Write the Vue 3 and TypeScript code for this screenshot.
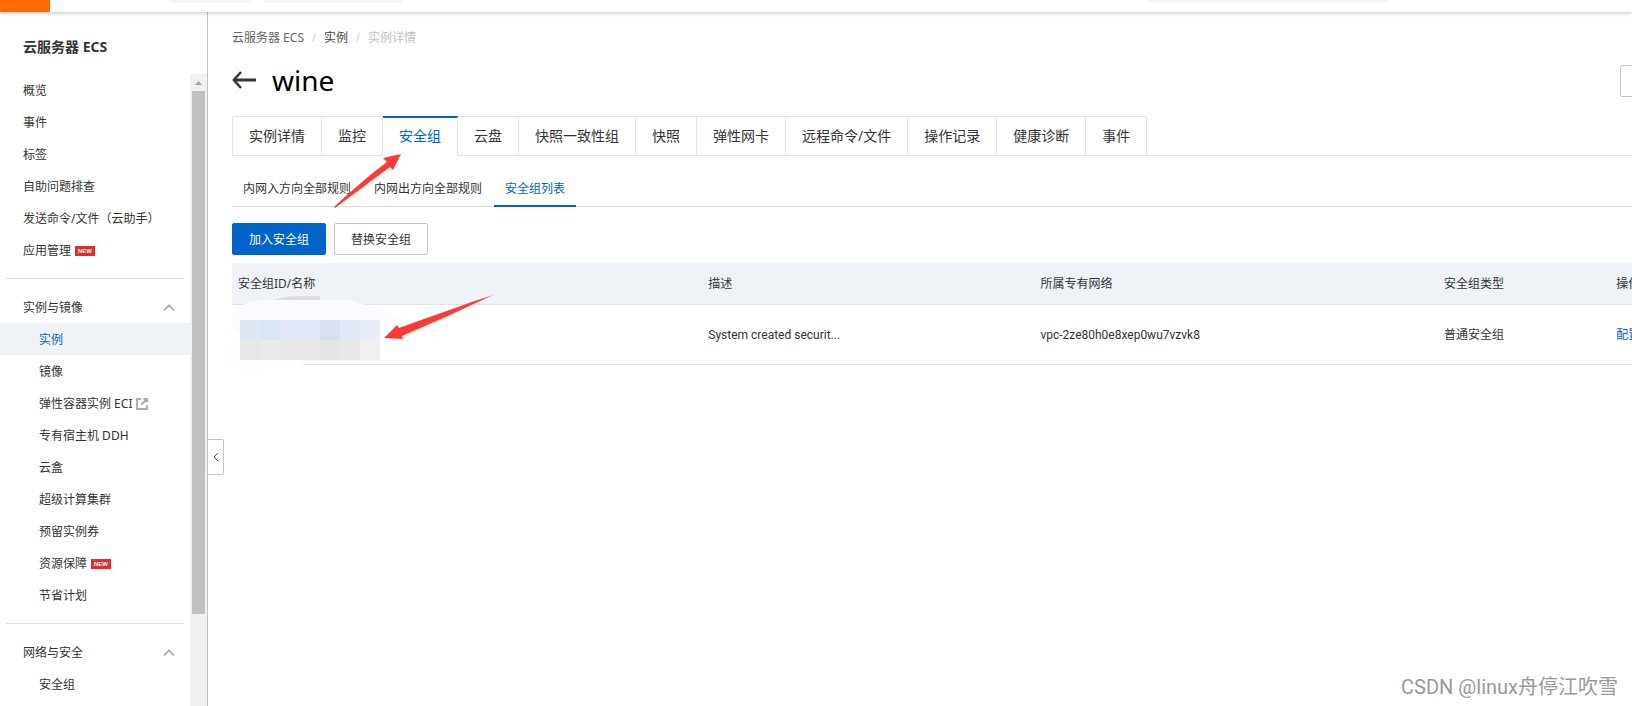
<script setup lang="ts">
import { ref } from 'vue'

interface NavItem {
  label: string
  badge?: boolean
  external?: boolean
}
interface NavGroup {
  title: string
  items: NavItem[]
}
interface SecurityGroup {
  description: string
  vpc: string
  type: string
}

const topItems: NavItem[] = [
  { label: '概览' },
  { label: '事件' },
  { label: '标签' },
  { label: '自助问题排查' },
  { label: '发送命令/文件（云助手）' },
  { label: '应用管理', badge: true },
]

const groups: NavGroup[] = [
  {
    title: '实例与镜像',
    items: [
      { label: '实例' },
      { label: '镜像' },
      { label: '弹性容器实例 ECI', external: true },
      { label: '专有宿主机 DDH' },
      { label: '云盒' },
      { label: '超级计算集群' },
      { label: '预留实例券' },
      { label: '资源保障', badge: true },
      { label: '节省计划' },
    ],
  },
  { title: '网络与安全', items: [{ label: '安全组' }] },
]
const currentNav = ref('实例')

const tabs = ['实例详情', '监控', '安全组', '云盘', '快照一致性组', '快照', '弹性网卡', '远程命令/文件', '操作记录', '健康诊断', '事件']
const currentTab = ref('安全组')

const subTabs = ['内网入方向全部规则', '内网出方向全部规则', '安全组列表']
const currentSubTab = ref('安全组列表')

const rows: SecurityGroup[] = [
  { description: 'System created securit...', vpc: 'vpc-2ze80h0e8xep0wu7vzvk8', type: '普通安全组' },
]

const mosaic: string[][] = [
  ['#e0e7f4', '#dae6f3', '#e2e8f4', '#e2e8f5', '#d9e0ee', '#e2e9f4', '#e9edf8'],
  ['#e8e8e8', '#eaeaea', '#e9e9e9', '#eae8e9', '#e6e6e6', '#e9e9e9', '#f0f0f0'],
]
</script>

<template>
  <div class="page">
    <header class="topbar">
      <span class="menu-block"></span>
      <span class="top-chip chip-a"></span>
      <span class="top-chip chip-b"></span>
      <span class="top-search"></span>
    </header>

    <div class="body">
      <aside class="sidebar">
        <h2 class="side-title">云服务器 ECS</h2>
        <div class="side-scroll">
          <nav class="side-nav">
            <a v-for="item in topItems" :key="item.label" href="#" class="nav-item">
              {{ item.label }}<span v-if="item.badge" class="badge">NEW</span>
            </a>
            <section v-for="group in groups" :key="group.title" class="nav-group">
              <button type="button" class="group-title">
                <span>{{ group.title }}</span>
                <svg width="12" height="8" viewBox="0 0 12 8"><path d="M1 6.500 6 1.300 11 6.500" fill="none" stroke="#aaa" stroke-width="1.800" /></svg>
              </button>
              <a
                v-for="item in group.items"
                :key="item.label"
                href="#"
                class="nav-item child"
                :class="{ current: item.label === currentNav }"
                @click.prevent="currentNav = item.label"
              >
                {{ item.label }}<span v-if="item.badge" class="badge">NEW</span>
                <svg v-if="item.external" class="external" width="12" height="12" viewBox="0 0 12 12">
                  <path d="M5 1H1v10h10V7M7.5 1H11v3.500M11 1 5.500 6.500" fill="none" stroke="#aaa" stroke-width="1.800" />
                </svg>
              </a>
            </section>
          </nav>
          <div class="scrollbar">
            <svg class="scroll-up" width="17" height="17" viewBox="0 0 17 17"><path d="M5 11 8.500 7 12 11Z" fill="#a3a3a3" /></svg>
            <div class="scroll-track"><div class="scroll-thumb"></div></div>
          </div>
        </div>
        <button type="button" class="collapse" aria-label="收起">
          <svg width="6" height="10" viewBox="0 0 6 10"><path d="M5 1 1 5 5 9" fill="none" stroke="#555" /></svg>
        </button>
      </aside>

      <main class="main">
        <div class="content">
          <nav class="crumbs">
            <a href="#" class="crumb">云服务器 ECS</a><span class="sep">/</span>
            <a href="#" class="crumb dark">实例</a><span class="sep">/</span>
            <span class="crumb last">实例详情</span>
          </nav>

          <div class="heading">
            <button type="button" class="back" aria-label="返回">
              <svg width="24" height="18" viewBox="0 0 24 18">
                <path d="M24 9H2" fill="none" stroke="#333" stroke-width="3" />
                <path d="M9 1 1.800 9 9 17" fill="none" stroke="#333" stroke-width="2.400" />
              </svg>
            </button>
            <h1>wine</h1>
            <button type="button" class="heading-action" aria-label="更多操作"></button>
          </div>

          <div class="tabs" role="tablist">
            <button
              v-for="tab in tabs"
              :key="tab"
              type="button"
              role="tab"
              class="tab"
              :class="{ active: tab === currentTab }"
              :aria-selected="tab === currentTab"
              @click="currentTab = tab"
            >{{ tab }}</button>
          </div>

          <div class="subtabs" role="tablist">
            <button
              v-for="tab in subTabs"
              :key="tab"
              type="button"
              role="tab"
              class="subtab"
              :class="{ active: tab === currentSubTab }"
              :aria-selected="tab === currentSubTab"
              @click="currentSubTab = tab"
            >{{ tab }}</button>
          </div>

          <div class="actions">
            <button type="button" class="btn primary">加入安全组</button>
            <button type="button" class="btn">替换安全组</button>
          </div>

          <table class="table">
            <colgroup>
              <col class="c-id" />
              <col class="c-desc" />
              <col class="c-vpc" />
              <col class="c-type" />
              <col />
            </colgroup>
            <thead>
              <tr>
                <th>安全组ID/名称</th>
                <th>描述</th>
                <th>所属专有网络</th>
                <th>安全组类型</th>
                <th>操作</th>
              </tr>
            </thead>
            <tbody>
              <tr v-for="row in rows" :key="row.vpc">
                <td class="id-cell">
                  <svg class="masked" width="184" height="80" viewBox="0 0 184 80">
                    <path d="M53 6 66 3 79 2H100V8H53Z" fill="#dcdde0" />
                    <path d="M20 80V77C8 74 0 66 1 59 2 50 9 44 18 41L10 32C9 22 16 16 25 10L53 6H128L140 10 160 15 182 26 160 28V66H83V75L56 76 20 80Z" fill="#fefefd" />
                    <path d="M12 24C13 16 20 12 25 10 38 5 48 6 53 6H128L140 10C156 11 170 19 182 26H20V40C12 36 10 30 12 24Z" fill="#fafbfe" />
                    <template v-for="(line, y) in mosaic" :key="y">
                      <rect v-for="(color, x) in line" :key="x" :x="20 + x * 20" :y="26 + y * 20" width="20" height="20" :fill="color" />
                    </template>
                  </svg>
                </td>
                <td>{{ row.description }}</td>
                <td>{{ row.vpc }}</td>
                <td>{{ row.type }}</td>
                <td><a href="#" class="link">配置规则</a></td>
              </tr>
            </tbody>
          </table>
        </div>
      </main>
    </div>

    <svg class="arrow arrow-tab" width="68" height="54" viewBox="0 0 68 54">
      <path d="M67 0 49 4 53 8C34 22 16 38 0 53L1 54C20 40 38 26 56 13L59 16Z" fill="#fd3a38" />
    </svg>
    <svg class="arrow arrow-row" width="110" height="45" viewBox="0 0 110 45">
      <path d="M0 43 13 30 15 33C46 22 78 10 109 0 79 14 49 28 18 41L19 44Z" fill="#fd3a38" />
    </svg>
    <div class="watermark">CSDN @linux舟停江吹雪</div>
  </div>
</template>

<style>
body {
  margin: 0;
  overflow: hidden;
}
</style>

<style scoped>
.page {
  position: relative;
  display: flex;
  flex-direction: column;
  height: 100vh;
  overflow: hidden;
  background: #fff;
  color: #333;
  font: 12px/20px "Noto Sans", "Noto Sans CJK SC", sans-serif;
}
button {
  padding: 0;
  border: 0;
  background: none;
  color: inherit;
  font: inherit;
  cursor: pointer;
}
a {
  color: inherit;
  text-decoration: none;
}
svg {
  display: block;
  flex: none;
}
.topbar {
  position: relative;
  z-index: 2;
  display: flex;
  align-items: flex-start;
  flex: none;
  height: 12px;
  background: #fff;
  box-shadow: 0 1px 4px rgba(0, 0, 0, 0.25);
}
.menu-block {
  width: 50px;
  height: 12px;
  margin-right: 120px;
  background: #ff6a00;
}
.top-chip {
  height: 3px;
  margin-right: 12px;
  background: #f4f5f7;
}
.chip-a {
  width: 82px;
}
.chip-b {
  width: 138px;
}
.top-search {
  width: 240px;
  height: 2px;
  margin: 0 244px 0 auto;
  background: #f5f5f5;
}
.body {
  display: flex;
  flex: 1;
  min-height: 0;
}
.sidebar {
  position: relative;
  display: flex;
  flex-direction: column;
  flex: none;
  width: 207px;
  border-right: 1px solid #c0c1c8;
}
.side-title {
  margin: 0;
  padding: 25px 23px 17px;
  font-size: 14px;
  line-height: 20px;
}
.side-scroll {
  display: flex;
  flex: 1;
  min-height: 0;
}
.side-nav {
  flex: 1;
  overflow: hidden;
}
.nav-item {
  display: flex;
  align-items: center;
  box-sizing: border-box;
  height: 32px;
  padding: 2px 0 0 23px;
  white-space: nowrap;
}
.child {
  padding-left: 39px;
}
.current {
  background: #eff3f8;
  color: #0064c8;
}
.badge {
  margin-left: 4px;
  padding: 0 3px;
  background: #e02d2d;
  color: #fff;
  font: bold 6px/10px "Liberation Sans", sans-serif;
}
.external {
  margin-left: 4px;
}
.nav-group::before {
  content: "";
  display: block;
  height: 1px;
  margin: 12px 6px;
  background: #dedede;
}
.group-title {
  display: flex;
  align-items: center;
  justify-content: space-between;
  width: 100%;
  height: 32px;
  padding: 2px 15px 0 23px;
}
.scrollbar {
  display: flex;
  flex-direction: column;
  width: 17px;
  background: #f1f1f1;
}
.scroll-track {
  flex: 1;
  padding: 0 2px;
}
.scroll-thumb {
  height: 85%;
  background: #c1c1c1;
}
.collapse {
  position: absolute;
  top: 427px;
  left: 207px;
  display: flex;
  align-items: center;
  justify-content: center;
  width: 17px;
  height: 36px;
  border: 1px solid #c0c6cc;
  border-radius: 0 2px 2px 0;
  background: #fff;
}
.main {
  flex: 1;
  min-width: 0;
  overflow: hidden;
}
.content {
  box-sizing: border-box;
  width: calc(100% + 152px);
  padding: 16px 0 0 24px;
}
.crumbs {
  display: flex;
}
.crumb {
  color: #666;
}
.dark {
  color: #444;
}
.crumb.last {
  color: #c1c1c1;
}
.sep {
  width: 20px;
  color: #d4d4d4;
  text-align: center;
}
.heading {
  display: flex;
  align-items: center;
  height: 32px;
  margin: 17px 0 19px;
}
.heading h1 {
  margin: 0 0 2px 16px;
  color: #000;
  font-size: 28px;
  font-weight: 400;
  line-height: 32px;
}
.back {
  margin-bottom: 2px;
}
.heading-action {
  width: 164px;
  height: 32px;
  margin-left: auto;
  border: 1px solid #c0c6cc;
  border-radius: 2px;
}
.tabs {
  display: flex;
  height: 39px;
  border-bottom: 1px solid #e3e4e6;
}
.tab {
  height: 39px;
  padding: 0 16px;
  border-top: 1px solid #e3e4e6;
  border-right: 1px solid #e3e4e6;
  font-size: 14px;
  white-space: nowrap;
}
.tab:first-child {
  border-left: 1px solid #e3e4e6;
  border-top-left-radius: 2px;
}
.tab:last-child {
  border-top-right-radius: 2px;
}
.tab.active {
  height: 40px;
  padding-bottom: 2px;
  border-top: 2px solid #0064c8;
  background: #fff;
  color: #0064c8;
}
.subtabs {
  display: flex;
  gap: 1px;
  height: 34px;
  margin-top: 16px;
  border-bottom: 1px solid #dedede;
}
.subtab {
  height: 35px;
  padding: 0 11px;
  border-bottom: 2px solid transparent;
  white-space: nowrap;
}
.subtab.active {
  border-color: #0064c8;
  color: #0064c8;
}
.actions {
  display: flex;
  gap: 8px;
  margin: 16px 0 8px;
}
.btn {
  height: 32px;
  padding: 2px 16px 0;
  border: 1px solid #c0c6cc;
  border-radius: 2px;
  background: #fff;
}
.primary {
  border-color: #0064c8;
  background: #0064c8;
  color: #fff;
}
.table {
  width: 100%;
  table-layout: fixed;
  border-spacing: 0;
}
.c-id {
  width: 30.3%;
}
.c-desc {
  width: 21.4%;
}
.c-vpc {
  width: 26%;
}
.c-type {
  width: 11.1%;
}
th,
td {
  padding: 0 6px;
  border-bottom: 1px solid #dee4eb;
  text-align: left;
  font-weight: 400;
}
th {
  height: 41px;
  background: #eff3f8;
}
td {
  height: 59px;
  font-family: Roboto, "Noto Sans CJK SC", sans-serif;
}
.id-cell {
  position: relative;
}
.masked {
  position: absolute;
  top: -11px;
  left: -12px;
}
.link {
  color: #0064c8;
}
.arrow {
  position: absolute;
  z-index: 3;
  pointer-events: none;
}
.arrow-tab {
  top: 154px;
  left: 334px;
}
.arrow-row {
  top: 295px;
  left: 384px;
}
.watermark {
  position: absolute;
  right: 14px;
  bottom: 5px;
  color: #999;
  font: 20px/28px Roboto, "Noto Sans CJK SC", sans-serif;
}
</style>
